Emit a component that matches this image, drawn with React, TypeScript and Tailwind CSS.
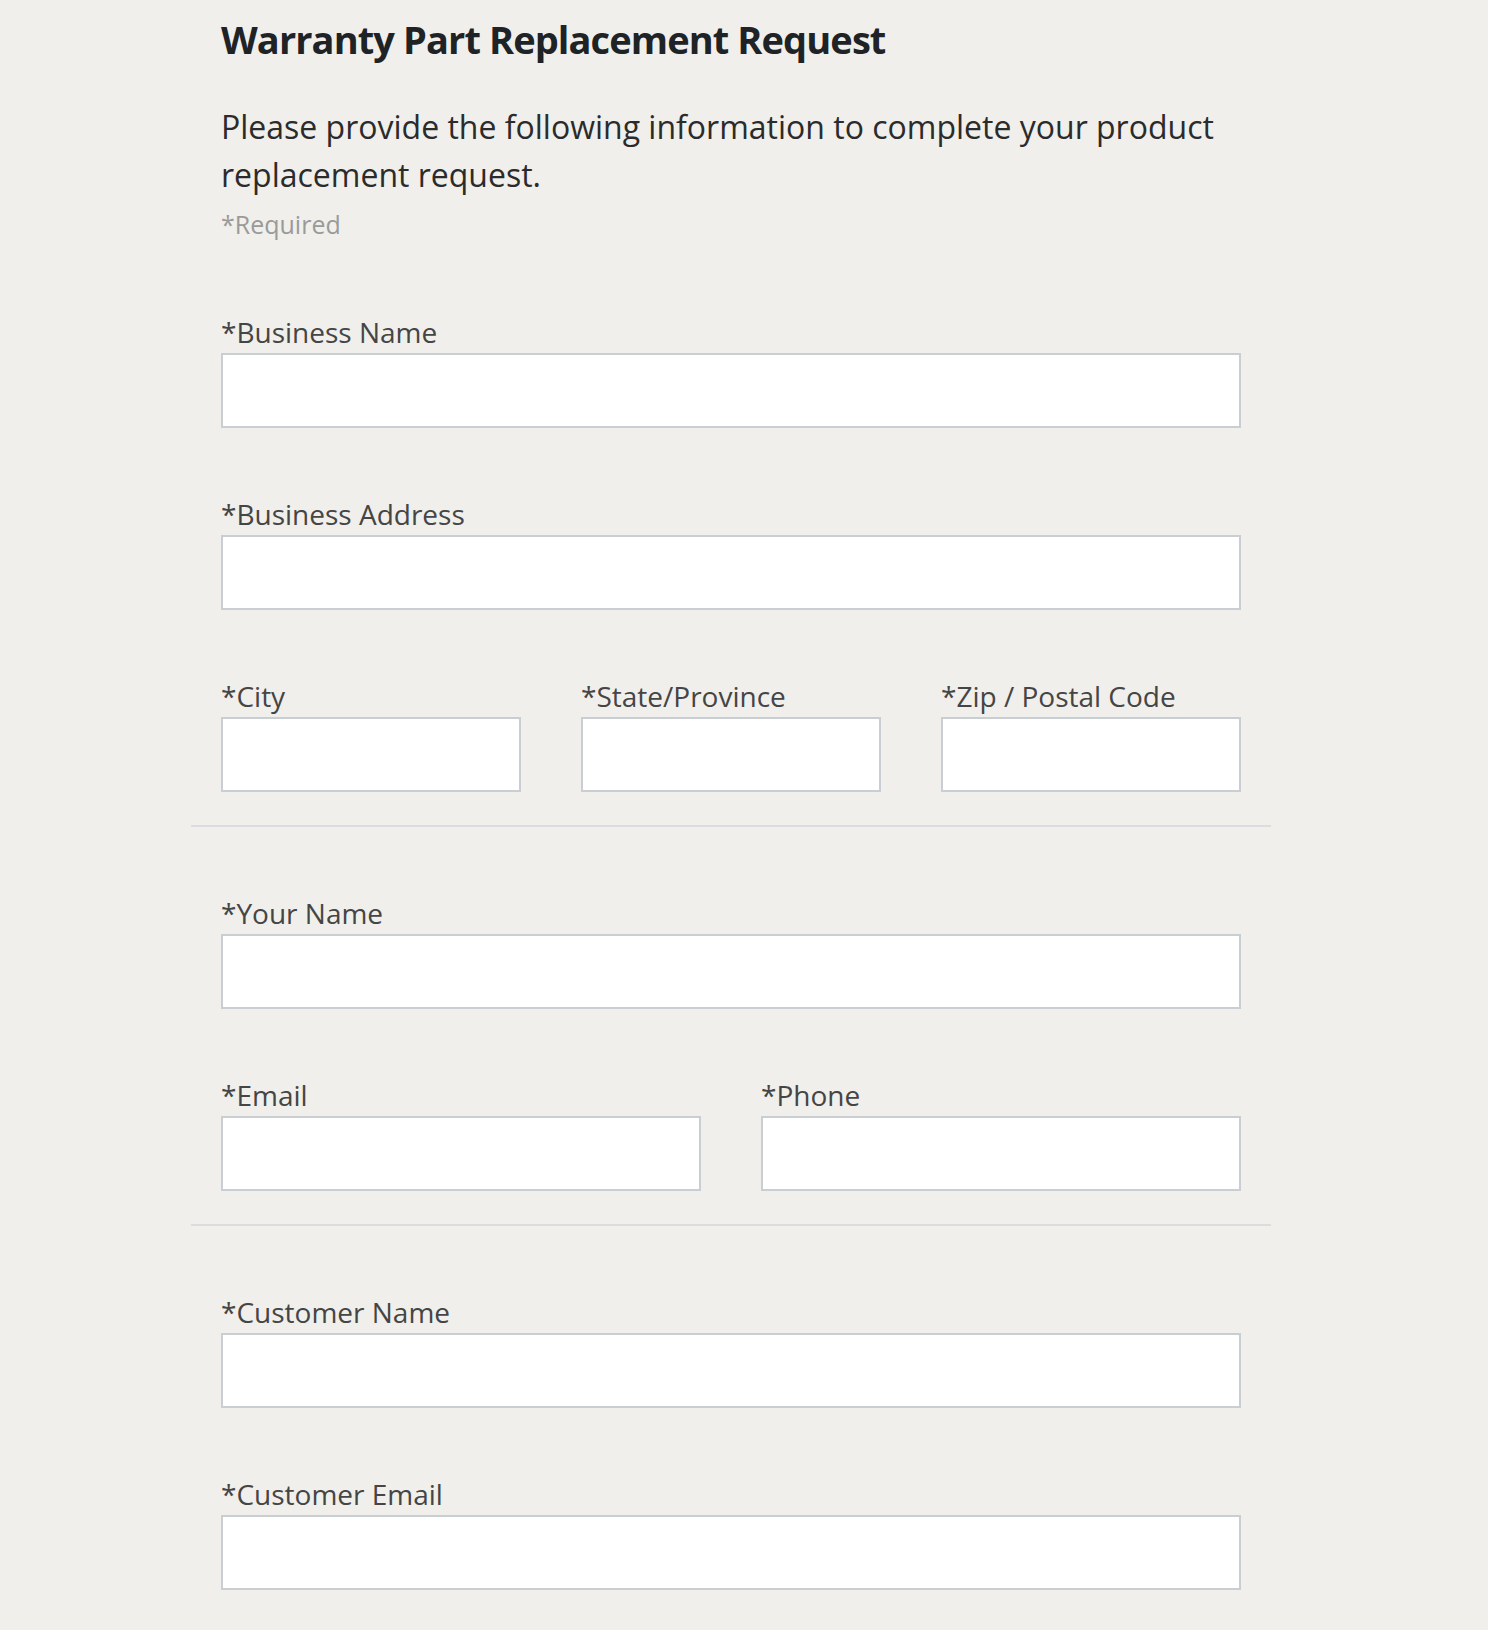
const sections = [
  [
    [{ label: 'Business Name' }],
    [{ label: 'Business Address' }],
    [{ label: 'City' }, { label: 'State/Province' }, { label: 'Zip / Postal Code' }],
  ],
  [
    [{ label: 'Your Name' }],
    [{ label: 'Email' }, { label: 'Phone' }],
  ],
  [
    [{ label: 'Customer Name' }],
    [{ label: 'Customer Email' }],
  ],
]

const gridCols: Record<number, string> = {
  1: 'grid-cols-1',
  2: 'grid-cols-2',
  3: 'grid-cols-3',
}

function Field({ label }: { label: string }) {
  return (
    <label className="block">
      <span className="mb-[1px] block text-[28px] leading-[40px] text-[#454545]">*{label}</span>
      <input
        type="text"
        className="block h-[75px] w-full border-2 border-[#c9ced3] bg-white px-3 outline-none"
      />
    </label>
  )
}

export default function App() {
  return (
    <div className="min-h-screen bg-[#f0efeb] pl-[191px] font-['Open_Sans',sans-serif]">
      <form className="w-[1080px] pb-[41px]" onSubmit={(e) => e.preventDefault()}>
        <div className="px-[30px] pt-[16px]">
          <h1 className="text-[38px] font-bold leading-[46px] tracking-[-0.9px] text-[#202326]">
            Warranty Part Replacement Request
          </h1>
          <p className="mt-[41px] text-[32px] leading-[48px] text-[#2b2b2b]">
            Please provide the following information to complete your product replacement request.
          </p>
          <p className="mt-[8px] text-[25px] leading-[34px] text-[#9a9a9a]">*Required</p>
        </div>

        <div className="mt-[71px]">
          {sections.map((rows, si) => (
            <div key={si}>
              {si > 0 && <hr className="mb-[66px] mt-[33px] border-t-2 border-[#dadcdf]" />}
              <div className="flex flex-col gap-[66px] px-[30px]">
                {rows.map((row, ri) => (
                  <div key={ri} className={`grid gap-x-[60px] ${gridCols[row.length]}`}>
                    {row.map((f) => (
                      <Field key={f.label} label={f.label} />
                    ))}
                  </div>
                ))}
              </div>
            </div>
          ))}
        </div>
      </form>
    </div>
  )
}
